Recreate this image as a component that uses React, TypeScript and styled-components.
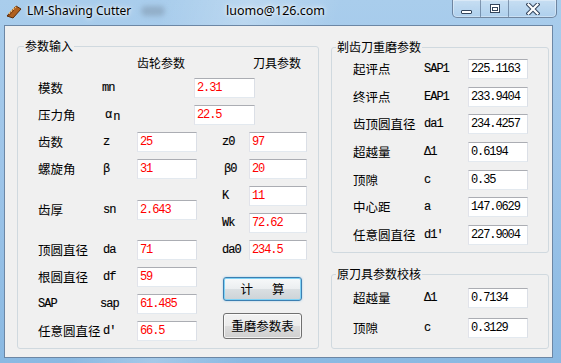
import React from "react";
import styled, { createGlobalStyle, css } from "styled-components";

const GlobalStyle = createGlobalStyle`
  html, body {
    margin: 0;
    padding: 0;
  }
  body {
    width: 561px;
    height: 363px;
    overflow: hidden;
    background: #9fc6ea;
  }
`;

const cjk = `"Noto Sans CJK SC", "Noto Sans", sans-serif`;
const mono = `"Liberation Mono", "DejaVu Sans Mono", monospace`;

type CellProps = { $r?: number; $c?: number; $rs?: number; $cs?: number };

const place = css<CellProps>`
  ${p => (p.$r ? `grid-row: ${p.$r} / span ${p.$rs ?? 1};` : "")}
  ${p => (p.$c ? `grid-column: ${p.$c} / span ${p.$cs ?? 1};` : "")}
`;

const Window = styled.div`
    width: 561px;
    height: 363px;
    display: flex;
    flex-direction: column;
    background:
        linear-gradient(105deg, rgba(255,255,255,0) 25%, rgba(255,255,255,0.22) 38%, rgba(255,255,255,0) 52%),
        linear-gradient(180deg, #a9cdec 0%, #9ec5e9 45%, #8ab9e2 100%);
`;

const TitleBar = styled.div`
    height: 25px;
    display: flex;
    align-items: flex-start;
    flex-shrink: 0;
`;

const TitleGroup = styled.div`
    width: 220px;
    display: flex;
    align-items: center;
    height: 22px;
    padding-left: 6px;
`;

const AppIcon = styled.svg`
    width: 16px;
    height: 16px;
    margin-right: 5px;
    flex-shrink: 0;
`;

const TitleText = styled.span`
    font: 12px/22px "Noto Sans", "Open Sans", sans-serif;
    color: #000;
    white-space: nowrap;
    text-shadow: 0 0 6px #fff, 0 0 3px rgba(255,255,255,0.9);
`;

const Smudge = styled.div`
    width: 24px;
    height: 10px;
    margin-left: 10px;
    border-radius: 5px;
    background: rgba(120, 140, 160, 0.45);
    filter: blur(2.5px);
`;

const Email = styled(TitleText)`
    font-size: 12.5px;
`;

const Caption = styled.div`
    display: flex;
    margin-left: auto;
    margin-right: 4px;
    height: 17px;
    border: 1px solid rgba(45, 65, 95, 0.55);
    border-top: none;
    border-radius: 0 0 5px 5px;
    background: linear-gradient(rgba(255,255,255,0.35), rgba(255,255,255,0.08));
    box-shadow: inset 0 0 0 1px rgba(255,255,255,0.35);
    overflow: hidden;
`;

const CapButton = styled.div<{ $w: number; $first?: boolean }>`
    width: ${p => p.$w}px;
    display: flex;
    align-items: center;
    justify-content: center;
    border-left: ${p => (p.$first ? "none" : "1px solid rgba(45, 65, 95, 0.45)")};
`;

const MinGlyph = styled.div`
    width: 9px;
    height: 2px;
    margin-top: 7px;
    background: #fff;
    border: 1px solid #34455c;
    border-radius: 1px;
`;

const MaxGlyph = styled.div`
    width: 8px;
    height: 7px;
    background: #fff;
    border: 1px solid #34455c;
    display: flex;
    align-items: center;
    justify-content: center;
    margin-top: -1px;
`;

const MaxInner = styled.div`
    width: 4px;
    height: 2px;
    border: 1px solid #34455c;
    margin-top: 1px;
    background: transparent;
`;

const Client = styled.div`
    flex: 1;
    margin: 0 8px 5px 4px;
    border: 1px solid #6c87a5;
    background: #f0f0f0;
    display: flex;
    align-items: flex-start;
    gap: 12px;
    padding: 13px 0 0 12px;
`;

const Group = styled.fieldset<{ $w: number; $h: number }>`
    box-sizing: border-box;
    width: ${p => p.$w}px;
    height: ${p => p.$h}px;
    margin: 0;
    padding: 0;
    min-width: 0;
    border: 1px solid #d0d9df;
    border-radius: 3px;
`;

const Legend = styled.legend<{ $ml: number }>`
    margin-left: ${p => p.$ml}px;
    padding: 0 1px;
    font: 12px/14px ${cjk};
    color: #000;
`;

const RightColumn = styled.div`
    display: flex;
    flex-direction: column;
    gap: 14px;
    margin-top: 1px;
`;

const InputGrid = styled.div`
    display: grid;
    grid-template-columns: 62px 37px 60px 52px 58px;
    grid-template-rows: 16px repeat(10, 20px);
    row-gap: 7px;
    padding: 2px 0 0 20px;
`;

const ParamGrid = styled.div<{ $top: number; $gap: number }>`
    display: grid;
    grid-template-columns: 71px 44px 60px;
    grid-auto-rows: 20px;
    row-gap: ${p => p.$gap}px;
    padding: ${p => p.$top}px 0 0 21px;
`;

const Header = styled.span<CellProps & { $ml?: number }>`
    ${place}
    align-self: center;
    margin-left: ${p => p.$ml ?? 0}px;
    font: 12px/16px ${cjk};
    color: #000;
    white-space: nowrap;
`;

const Label = styled.span<CellProps>`
    ${place}
    align-self: center;
    font: 12.5px/16px ${cjk};
    color: #000;
    white-space: nowrap;
`;

const Sym = styled.span<CellProps & { $pad?: number }>`
    ${place}
    align-self: center;
    padding-left: ${p => p.$pad ?? 0}px;
    font: 12px/14px ${mono};
    letter-spacing: -1px;
    -webkit-text-stroke: 0.15px #000;
    color: #000;
    white-space: nowrap;
`;

const Sub = styled.span`
    position: relative;
    top: 2px;
    margin-left: 2px;
`;

const Field = styled.input<CellProps & { $w: number; $red?: boolean; $ml?: number }>`
    ${place}
    align-self: center;
    box-sizing: border-box;
    width: ${p => p.$w}px;
    height: 20px;
    margin: 0 0 0 ${p => p.$ml ?? 0}px;
    padding: 0 2px;
    background: #fff;
    border: 1px solid;
    border-color: #abadb3 #dbdfe6 #e3e9ef #e2e3ea;
    outline: none;
    font: 12px/18px ${mono};
    letter-spacing: -1.1px;
    color: ${p => (p.$red ? "#ff0000" : "#000")};
`;

const ButtonStack = styled.div<CellProps>`
    ${place}
    display: flex;
    flex-direction: column;
    gap: 12px;
    padding: 10px 0 0 26px;
`;

const PushButton = styled.button<{ $h: number; $default?: boolean }>`
    box-sizing: border-box;
    width: 79px;
    height: ${p => p.$h}px;
    padding: 0;
    border: 1px solid #707070;
    border-radius: 3px;
    background: linear-gradient(#f2f2f2 0%, #ebebeb 50%, #dddddd 51%, #cfcfcf 100%);
    font: 12.5px/16px ${cjk};
    color: #000;
    box-shadow: inset 0 0 0 1px rgba(255,255,255,0.7);
    ${p =>
        p.$default &&
        css`
            border-color: #3c7fb1;
            word-spacing: 16px;
            background: linear-gradient(#f7f9fa 0%, #ebeef0 50%, #dadfe2 51%, #cdd3d7 100%);
            box-shadow: inset 0 0 0 1px #7fd2f5, 0 0 2px rgba(60, 160, 230, 0.5);
        `}
`;

type Param = { label: string; sym: React.ReactNode; value: string };

const cutterParams: Param[] = [
    { label: "起评点", sym: "SAP1", value: "225.1163" },
    { label: "终评点", sym: "EAP1", value: "233.9404" },
    { label: "齿顶圆直径", sym: "da1", value: "234.4257" },
    { label: "超越量", sym: "Δ1", value: "0.6194" },
    { label: "顶隙", sym: "c", value: "0.35" },
    { label: "中心距", sym: "a", value: "147.0629" },
    { label: "任意圆直径", sym: "d1′", value: "227.9004" },
];

const checkParams: Param[] = [
    { label: "超越量", sym: "Δ1", value: "0.7134" },
    { label: "顶隙", sym: "c", value: "0.3129" },
];

const renderParams = (list: Param[]) =>
    list.map(p => (
        <React.Fragment key={p.label + p.value}>
            <Label>{p.label}</Label>
            <Sym>{p.sym}</Sym>
            <Field $w={60} readOnly value={p.value} />
        </React.Fragment>
    ));

const App = (): JSX.Element => {
    return (
        <Window>
            <GlobalStyle />
            <TitleBar>
                <TitleGroup>
                    <AppIcon viewBox="0 0 16 16">
                        <path d="M1 13 L10 3 L15 6 L7 15 Z" fill="#b0601f" stroke="#5a2a08" strokeWidth="1" />
                        <path d="M3 11 L4 9 M5 9 L6 7 M7 7 L8 5 M9 5 L10 3.5" stroke="#f3c27a" strokeWidth="1.2" />
                        <path d="M2 13.5 L8 7" stroke="#7a3a10" strokeWidth="1" />
                    </AppIcon>
                    <TitleText>LM-Shaving Cutter</TitleText>
                    <Smudge />
                </TitleGroup>
                <Email>luomo@126.com</Email>
                <Caption>
                    <CapButton $w={27} $first>
                        <MinGlyph />
                    </CapButton>
                    <CapButton $w={27}>
                        <MaxGlyph>
                            <MaxInner />
                        </MaxGlyph>
                    </CapButton>
                    <CapButton $w={47}>
                        <svg width="14" height="12" viewBox="0 0 14 12">
                            <path d="M2.5 1.5 L11.5 10.5 M11.5 1.5 L2.5 10.5" stroke="#34455c" strokeWidth="4.2" strokeLinecap="square" />
                            <path d="M2.5 1.5 L11.5 10.5 M11.5 1.5 L2.5 10.5" stroke="#fff" strokeWidth="2.2" strokeLinecap="square" />
                        </svg>
                    </CapButton>
                </Caption>
            </TitleBar>
            <Client>
                <Group $w={302} $h={310}>
                    <Legend $ml={6}>参数输入</Legend>
                    <InputGrid>
                        <Header $r={1} $c={3} $cs={2}>齿轮参数</Header>
                        <Header $r={1} $c={5} $ml={4}>刀具参数</Header>

                        <Label $r={2} $c={1}>模数</Label>
                        <Sym $r={2} $c={2} $pad={2}>mn</Sym>
                        <Field $r={2} $c={3} $cs={3} $w={61} $ml={57} $red readOnly value="2.31" />

                        <Label $r={3} $c={1}>压力角</Label>
                        <Sym $r={3} $c={2} $pad={5}>α<Sub>n</Sub></Sym>
                        <Field $r={3} $c={3} $cs={3} $w={61} $ml={57} $red readOnly value="22.5" />

                        <Label $r={4} $c={1}>齿数</Label>
                        <Sym $r={4} $c={2} $pad={3}>z</Sym>
                        <Field $r={4} $c={3} $w={60} $red readOnly value="25" />
                        <Sym $r={4} $c={4} $pad={25}>z0</Sym>
                        <Field $r={4} $c={5} $w={58} $red readOnly value="97" />

                        <Label $r={5} $c={1}>螺旋角</Label>
                        <Sym $r={5} $c={2} $pad={3}>β</Sym>
                        <Field $r={5} $c={3} $w={60} $red readOnly value="31" />
                        <Sym $r={5} $c={4} $pad={27}>β0</Sym>
                        <Field $r={5} $c={5} $w={58} $red readOnly value="20" />

                        <Sym $r={6} $c={4} $pad={25}>K</Sym>
                        <Field $r={6} $c={5} $w={58} $red readOnly value="11" />
                        <Label $r={6} $c={1} $rs={2}>齿厚</Label>
                        <Sym $r={6} $c={2} $rs={2} $pad={3}>sn</Sym>
                        <Field $r={6} $c={3} $rs={2} $w={60} $red readOnly value="2.643" />
                        <Sym $r={7} $c={4} $pad={25}>Wk</Sym>
                        <Field $r={7} $c={5} $w={58} $red readOnly value="72.62" />

                        <Label $r={8} $c={1}>顶圆直径</Label>
                        <Sym $r={8} $c={2} $pad={3}>da</Sym>
                        <Field $r={8} $c={3} $w={60} $red readOnly value="71" />
                        <Sym $r={8} $c={4} $pad={25}>da0</Sym>
                        <Field $r={8} $c={5} $w={58} $red readOnly value="234.5" />

                        <Label $r={9} $c={1}>根圆直径</Label>
                        <Sym $r={9} $c={2} $pad={3}>df</Sym>
                        <Field $r={9} $c={3} $w={60} $red readOnly value="59" />

                        <Sym $r={10} $c={1}>SAP</Sym>
                        <Sym $r={10} $c={2}>sap</Sym>
                        <Field $r={10} $c={3} $w={60} $red readOnly value="61.485" />

                        <Label $r={11} $c={1}>任意圆直径</Label>
                        <Sym $r={11} $c={2} $pad={3}>d′</Sym>
                        <Field $r={11} $c={3} $w={60} $red readOnly value="66.5" />

                        <ButtonStack $r={9} $c={4} $rs={3} $cs={2}>
                            <PushButton $h={24} $default>计 算</PushButton>
                            <PushButton $h={26}>重磨参数表</PushButton>
                        </ButtonStack>
                    </InputGrid>
                </Group>
                <RightColumn>
                    <Group $w={218} $h={213}>
                        <Legend $ml={4}>剃齿刀重磨参数</Legend>
                        <ParamGrid $top={5} $gap={7.67}>
                            {renderParams(cutterParams)}
                        </ParamGrid>
                    </Group>
                    <Group $w={218} $h={82}>
                        <Legend $ml={4}>原刀具参数校核</Legend>
                        <ParamGrid $top={7} $gap={10}>
                            {renderParams(checkParams)}
                        </ParamGrid>
                    </Group>
                </RightColumn>
            </Client>
        </Window>
    );
};

export default App;
